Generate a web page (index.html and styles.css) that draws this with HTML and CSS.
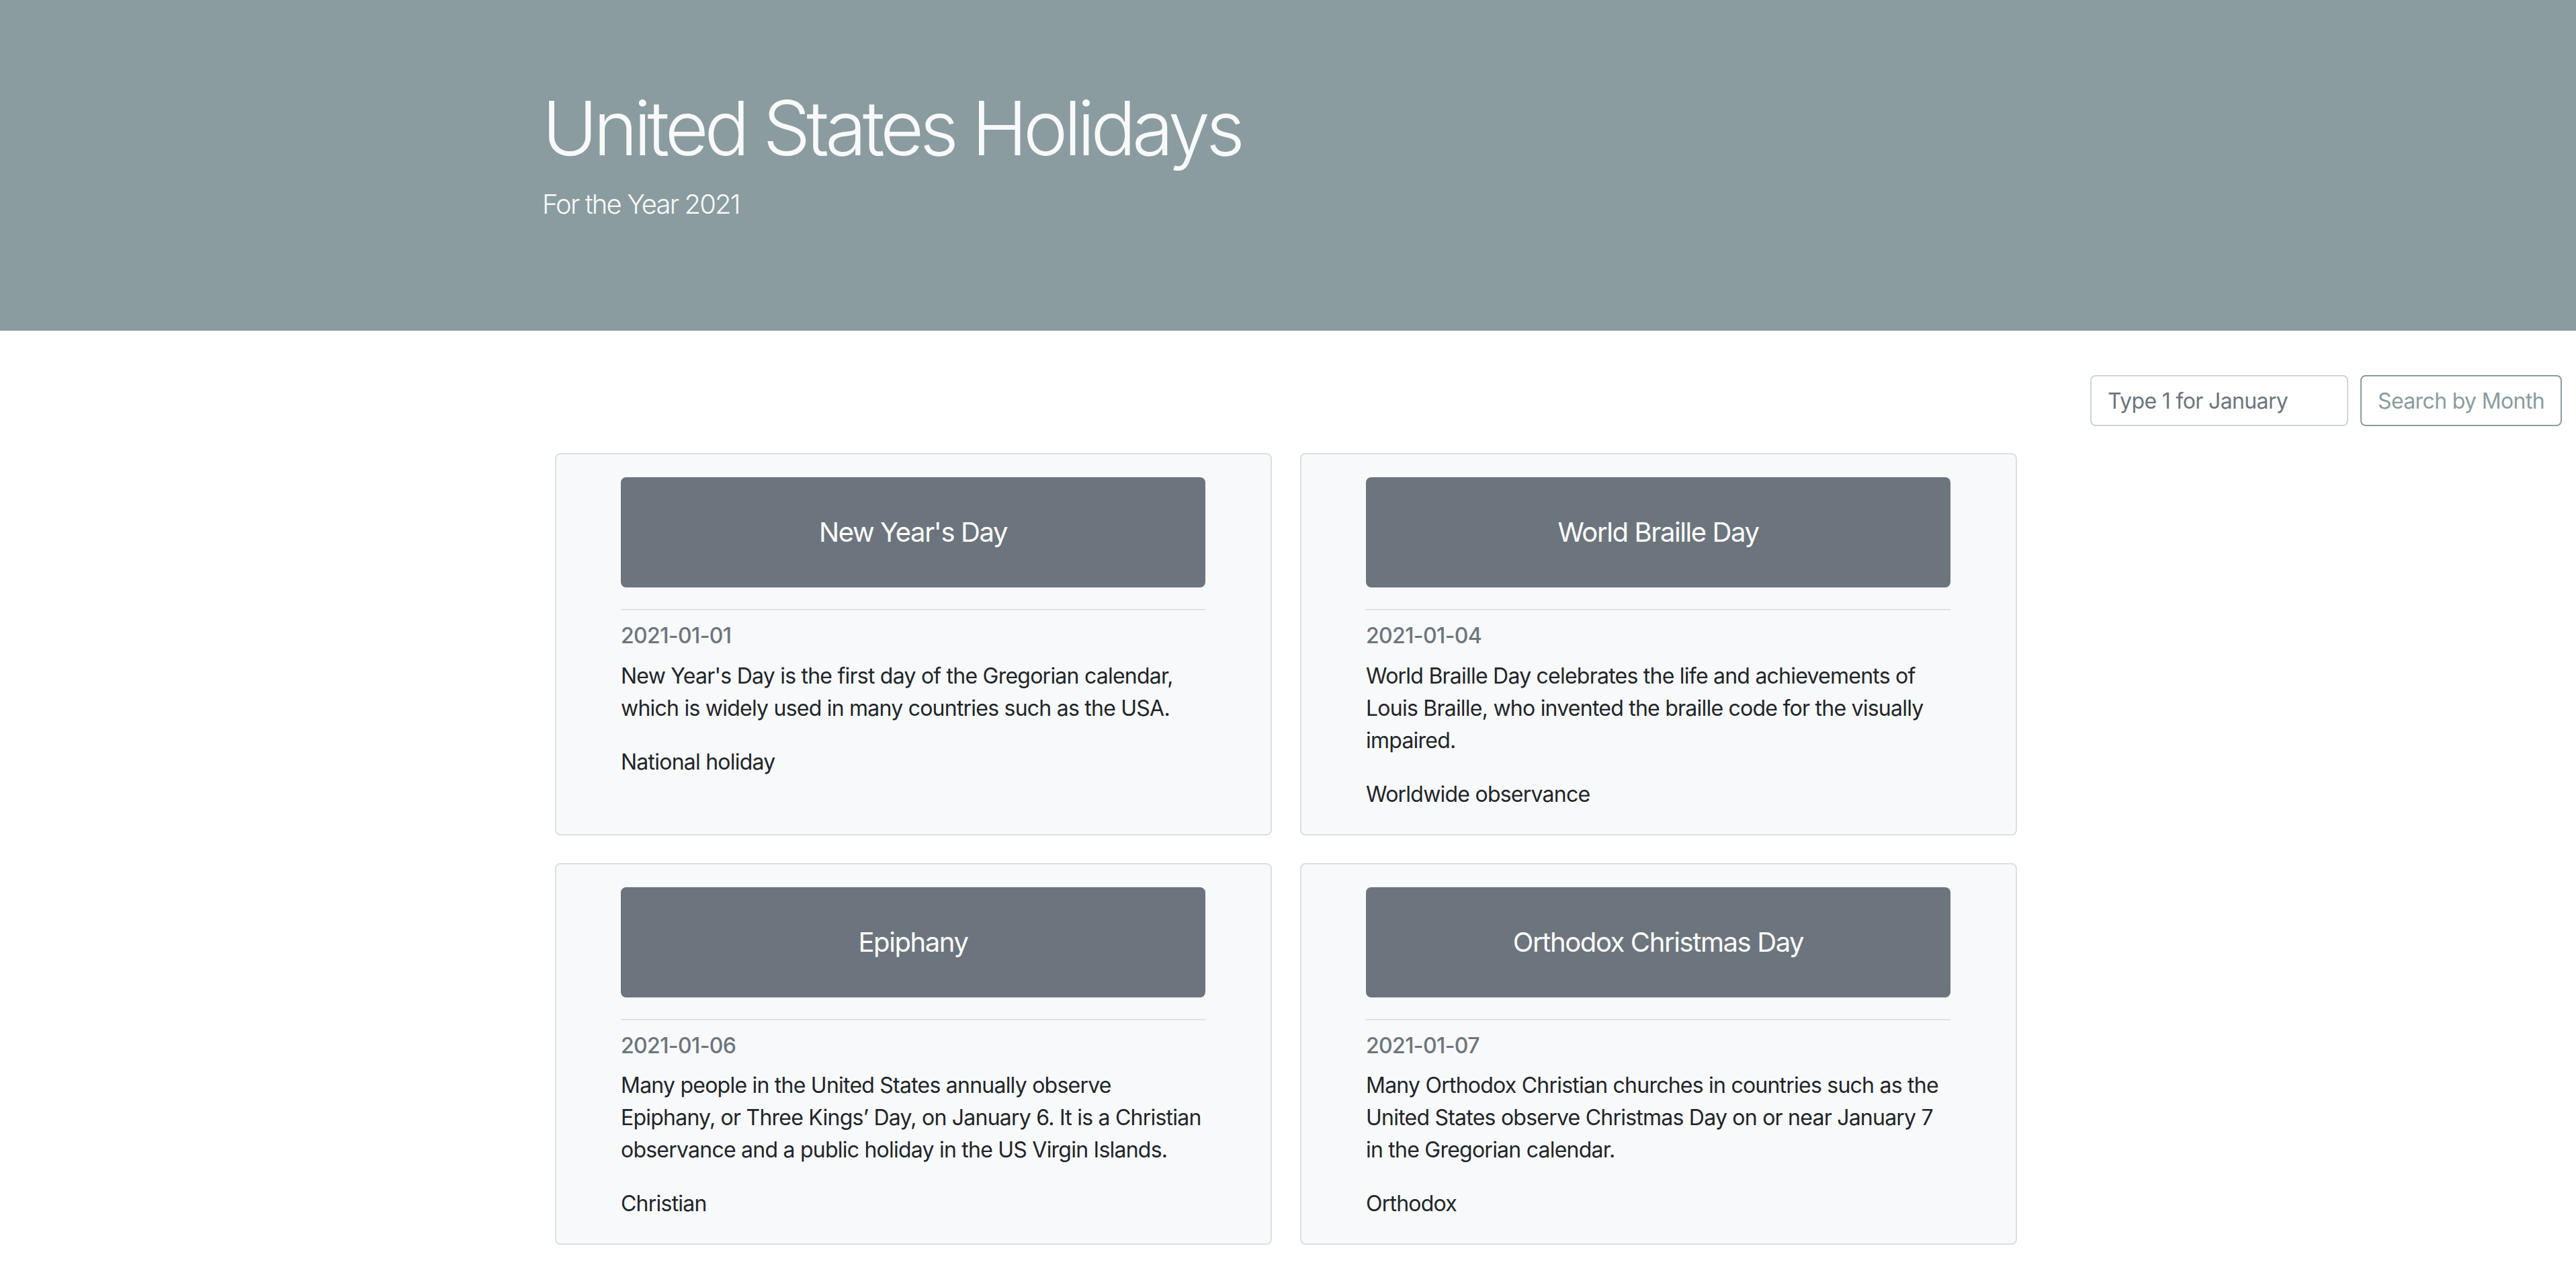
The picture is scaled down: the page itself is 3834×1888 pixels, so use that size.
FILE: index.html
```html
<!DOCTYPE html>
<html lang="en">
<head>
<meta charset="utf-8">
<title>United States Holidays</title>
<link rel="stylesheet" href="styles.css">
</head>
<body>
<header class="jumbotron">
  <div class="container">
    <h1 class="display">United States Holidays</h1>
    <p class="lead">For the Year 2021</p>
  </div>
</header>

<div class="search-bar">
  <form class="search-form">
    <input class="search-input" type="text" placeholder="Type 1 for January">
    <button class="search-btn" type="button">Search by Month</button>
  </form>
</div>

<main class="cards">
  <article class="card">
    <div class="card-head"><h5 class="card-title">New Year's Day</h5></div>
    <hr class="divider">
    <h6 class="card-date">2021-01-01</h6>
    <p class="card-text">New Year's Day is the first day of the Gregorian calendar, which is widely used in many countries such as the USA.</p>
    <p class="card-text">National holiday</p>
  </article>
  <article class="card">
    <div class="card-head"><h5 class="card-title">World Braille Day</h5></div>
    <hr class="divider">
    <h6 class="card-date">2021-01-04</h6>
    <p class="card-text">World Braille Day celebrates the life and achievements of Louis Braille, who invented the braille code for the visually impaired.</p>
    <p class="card-text">Worldwide observance</p>
  </article>
  <article class="card">
    <div class="card-head"><h5 class="card-title">Epiphany</h5></div>
    <hr class="divider">
    <h6 class="card-date">2021-01-06</h6>
    <p class="card-text">Many people in the United States annually observe Epiphany, or Three Kings’ Day, on January 6. It is a Christian observance and a public holiday in the US Virgin Islands.</p>
    <p class="card-text">Christian</p>
  </article>
  <article class="card">
    <div class="card-head"><h5 class="card-title">Orthodox Christmas Day</h5></div>
    <hr class="divider">
    <h6 class="card-date">2021-01-07</h6>
    <p class="card-text">Many Orthodox Christian churches in countries such as the United States observe Christmas Day on or near January 7 in the Gregorian calendar.</p>
    <p class="card-text">Orthodox</p>
  </article>
</main>
</body>
</html>
```

FILE: styles.css
```css
* { box-sizing: border-box; }

html, body {
  margin: 0;
  padding: 0;
  background: #ffffff;
}

body {
  font-family: "Inter", "Roboto", "Liberation Sans", sans-serif;
  font-size: 32px;
  line-height: 1.5;
  color: #212529;
  letter-spacing: -0.024em;
}

.jumbotron {
  background: #8a9c9f;
  padding: 123px 0 126px;
  margin: 0 0 66px;
}

.container {
  width: 2280px;
  margin: 0 auto;
  padding: 0 30px;
}

.display {
  margin: 0 0 17px;
  font-size: 112px;
  font-weight: 300;
  line-height: 1.2;
  color: #f8f9fa;
  letter-spacing: -0.054em;
}

.lead {
  margin: 0 0 32px;
  font-size: 40px;
  font-weight: 300;
  line-height: 1.5;
  color: #f8f9fa;
  letter-spacing: -0.047em;
}

.search-bar {
  display: flex;
  justify-content: flex-end;
  padding-right: 21px;
}

.search-form {
  display: flex;
  gap: 18px;
}

.search-input {
  width: 384px;
  height: 76px;
  padding: 12px 24px;
  font-family: inherit;
  font-size: 32px;
  letter-spacing: -0.02em;
  color: #495057;
  background: #fff;
  border: 2px solid #ced4da;
  border-radius: 8px;
  outline: none;
}

.search-input::placeholder {
  color: #6c757d;
}

.search-btn {
  height: 76px;
  padding: 12px 24px;
  font-family: inherit;
  font-size: 32px;
  letter-spacing: -0.02em;
  color: #8a9c9f;
  background: transparent;
  border: 2px solid #8a9c9f;
  border-radius: 8px;
}

.cards {
  display: grid;
  grid-template-columns: 1067px 1067px;
  column-gap: 42px;
  row-gap: 41px;
  width: 2176px;
  margin: 40px 0 0 826px;
}

.card {
  background: #f8f9fa;
  border: 2px solid #dcdfe2;
  border-radius: 8px;
  padding: 34px 97px 3px 96px;
}

.card-head {
  height: 164px;
  display: flex;
  align-items: center;
  justify-content: center;
  background: #6c757d;
  border-radius: 8px;
}

.card-title {
  margin: 0;
  font-size: 40px;
  font-weight: 400;
  line-height: 1.2;
  color: #ffffff;
  letter-spacing: -0.035em;
}

.divider {
  margin: 32px 0 19px;
  border: 0;
  border-top: 2px solid #dee1e4;
  height: 0;
}

.card-date {
  margin: 0 0 16px;
  font-size: 32px;
  font-weight: 500;
  line-height: 1.2;
  color: #6c757d;
  letter-spacing: -0.02em;
}

.card-text {
  margin: 0 0 32px;
}
```
